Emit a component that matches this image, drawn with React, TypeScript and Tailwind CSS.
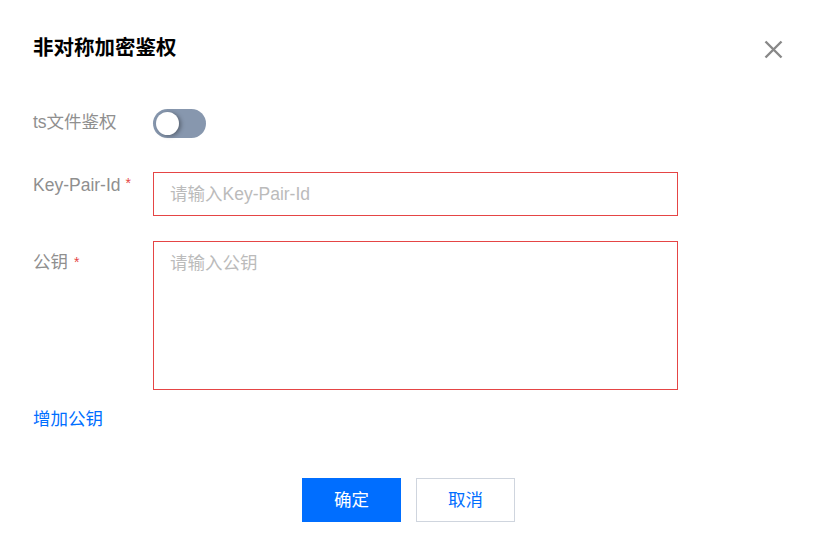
import React from "react";

export default function App() {
  const font = { fontFamily: '"Liberation Sans", "Noto Sans CJK SC", sans-serif' };
  return (
    <div className="w-[817px] h-[554px] bg-white relative" style={font}>
      <div className="pt-[34px] pl-[33px] pr-[34px]">
        <div className="flex items-center justify-between h-[28px]">
          <div className="text-[20.5px] leading-[28px] font-bold text-[#000]">非对称加密鉴权</div>
          <svg width="19" height="19" viewBox="0 0 19 19" className="mt-[2px]">
            <path d="M1.5 1.5 L17.5 17.5 M17.5 1.5 L1.5 17.5" stroke="#888888" strokeWidth="2.4" strokeLinecap="butt" />
          </svg>
        </div>

        <div className="mt-[47px] flex items-center h-[29px]">
          <div className="w-[120px] text-[17.5px] leading-[26px] text-[#8f8f8f] -mt-[3px]">ts文件鉴权</div>
          <div className="w-[53px] h-[29px] rounded-full bg-[#8797ae] flex items-center pl-[3px]">
            <div className="w-[23px] h-[23px] rounded-full bg-white shadow-[2px_1px_4px_rgba(0,0,0,0.35)]" />
          </div>
        </div>

        <div className="mt-[34px] flex items-start">
          <div className="w-[120px] text-[17.5px] leading-[26px] text-[#8f8f8f] flex items-start">
            <span>Key-Pair-Id</span>
            <span className="text-[#e54545] text-[14px] leading-[22px] ml-[5px]">*</span>
          </div>
          <div className="w-[525px] h-[44px] border border-[#e54545] flex items-center pl-[16px] text-[17.5px] text-[#bbb]">
            请输入Key-Pair-Id
          </div>
        </div>

        <div className="mt-[25px] flex items-start">
          <div className="w-[120px] pt-[8px] text-[17.5px] leading-[26px] text-[#8f8f8f] flex items-start">
            <span>公钥</span>
            <span className="text-[#e54545] text-[14px] leading-[22px] ml-[6px] mt-[2px]">*</span>
          </div>
          <div className="w-[525px] h-[149px] border border-[#e54545] pl-[16px] pt-[8px] text-[17.5px] leading-[26px] text-[#bbb]">
            请输入公钥
          </div>
        </div>

        <div className="mt-[16px] text-[17.5px] leading-[26px] text-[#006eff]">增加公钥</div>
      </div>

      <div className="mt-[46px] flex justify-center gap-[15px]">
        <div className="w-[99px] h-[44px] bg-[#006eff] text-white text-[17.5px] flex items-center justify-center">确定</div>
        <div className="w-[99px] h-[44px] border border-[#cfd5de] text-[#006eff] text-[17.5px] flex items-center justify-center">取消</div>
      </div>
    </div>
  );
}
